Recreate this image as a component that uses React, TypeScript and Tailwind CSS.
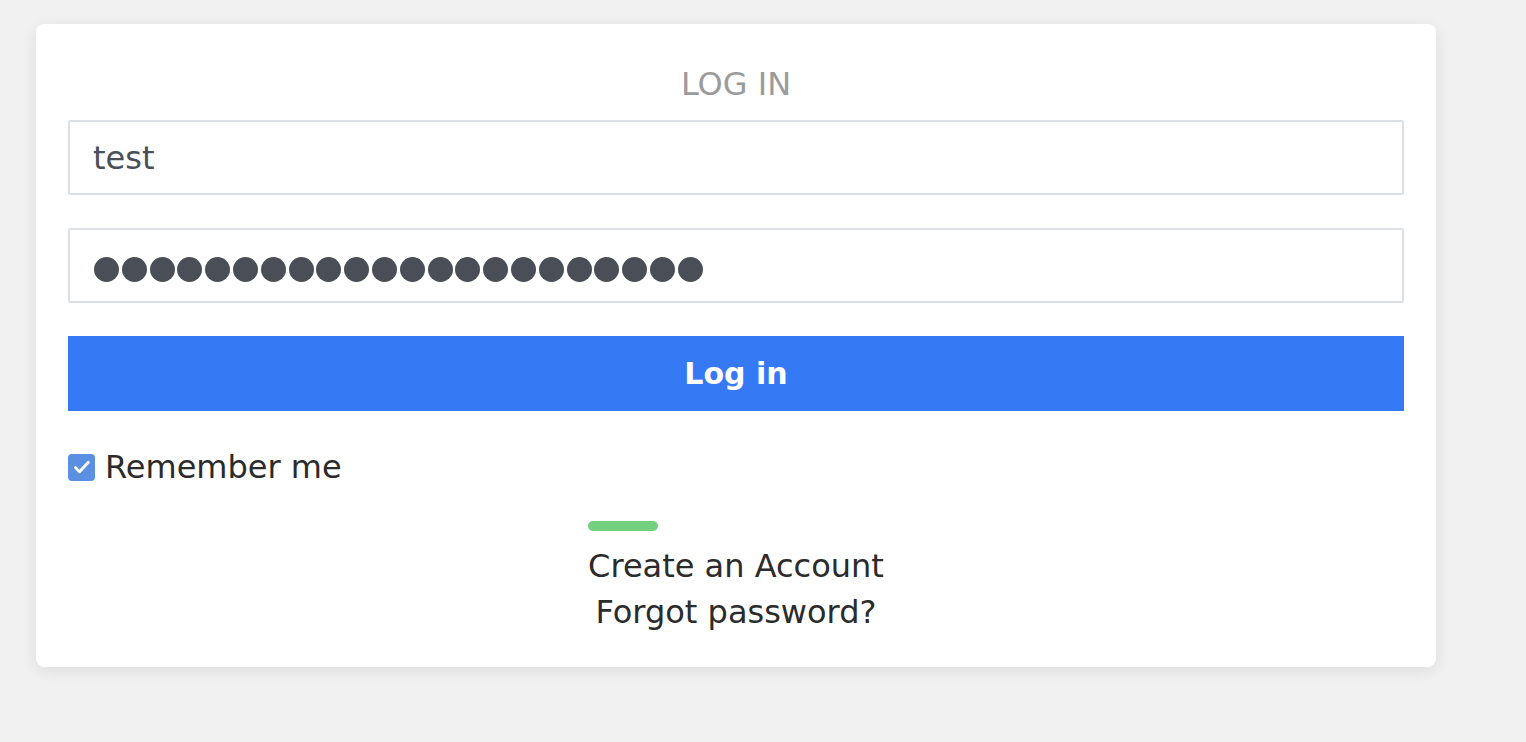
import { useState } from "react";

const PASSWORD_LENGTH = 22;

export default function App() {
  const [username, setUsername] = useState("test");
  const [remember, setRemember] = useState(true);

  return (
    <div className="min-h-screen w-full bg-[#f0f0f0] pt-6 pl-9 font-['DejaVu_Sans',sans-serif]">
      <div className="w-[1400px] rounded-lg bg-white px-8 pt-[42px] pb-[32px] shadow-[0_4px_14px_rgba(0,0,0,0.08)]">
        <div className="text-center text-[32px] leading-[36px] text-[#9b9b9b]">LOG IN</div>

        <form className="mt-[18px] flex flex-col" onSubmit={(e) => e.preventDefault()}>
          <input
            value={username}
            onChange={(e) => setUsername(e.target.value)}
            className="h-[75px] w-full rounded-[2px] border-2 border-[#dcdfe3] px-[23px] text-[32px] text-[#4a4f57] outline-none"
          />

          {/* password field, masked */}
          <div className="mt-[33px] flex h-[75px] w-full items-center gap-[2.8px] rounded-[2px] border-2 border-[#dcdfe3] px-[24px] pt-[7px]">
            {Array.from({ length: PASSWORD_LENGTH }).map((_, i) => (
              <span key={i} className="h-[25px] w-[25px] shrink-0 rounded-full bg-[#4a4f57]" />
            ))}
          </div>

          <button
            type="submit"
            className="mt-[33px] h-[75px] w-full bg-[#3679f4] text-[30px] font-bold text-white"
          >
            Log in
          </button>

          {/* remember me */}
          <label className="mt-[36px] flex items-center gap-[10px] text-[32px] leading-[40px] text-[#2b2b2b]">
            <span
              onClick={() => setRemember(!remember)}
              className="flex h-[27px] w-[27px] items-center justify-center rounded-[4px] bg-[#5b8fe2]"
            >
              {remember && (
                <svg width="22" height="22" viewBox="0 0 20 20" fill="none">
                  <path d="M4 10.5l3.8 3.8 8-8.6" stroke="white" strokeWidth="2.6" strokeLinecap="round" strokeLinejoin="round" />
                </svg>
              )}
            </span>
            Remember me
          </label>
        </form>

        <div className="mt-[34px] flex justify-center">
          <div className="flex flex-col items-center text-[32px] leading-[46px] text-[#2b2b2b]">
            <div className="mb-[12px] h-[10px] w-[70px] self-start rounded-full bg-[#72d07f]" />
            <a href="#">Create an Account</a>
            <a href="#">Forgot password?</a>
          </div>
        </div>
      </div>
    </div>
  );
}
